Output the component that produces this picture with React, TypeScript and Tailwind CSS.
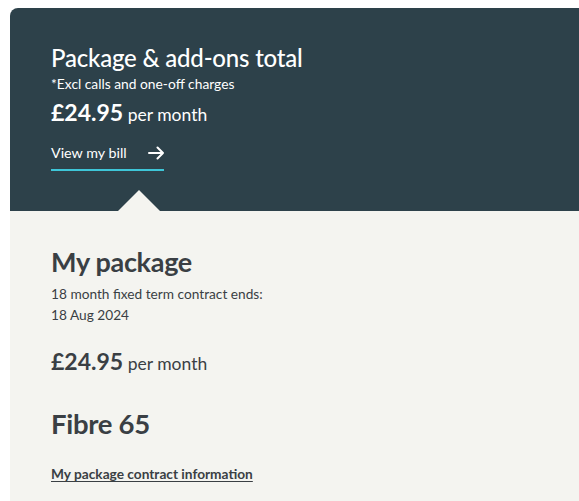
import React from "react";

export default function App() {
  return (
    <div className="w-[579px] h-[501px] bg-white pt-2 pl-[10px] overflow-hidden" style={{ fontFamily: "Lato, 'Noto Sans', sans-serif" }}>
      <div className="rounded-tl-lg overflow-hidden">
        <div className="relative bg-[#2d414a] h-[203px] pl-[41px] pt-[35px] text-white">
          <h2 className="text-[24px] leading-[30px] font-medium tracking-[-0.2px]">Package &amp; add-ons total</h2>
          <p className="text-[13.8px] leading-[18px] mt-[2px]">*Excl calls and one-off charges</p>
          <p className="mt-[6px] leading-[26px]">
            <span className="text-[23px] font-bold">£24.95</span>
            <span className="text-[17.5px]"> per month</span>
          </p>
          <a className="mt-[16px] inline-flex items-center gap-[21px] border-b-2 border-[#3ec6d8] pb-[7px] text-[14.3px] leading-[18px]">
            <span>View my bill</span>
            <svg width="16" height="14" viewBox="0 0 16 14" fill="none" stroke="white" strokeWidth="2" strokeLinecap="round" strokeLinejoin="round">
              <path d="M1 7h14M9.5 1.5L15 7l-5.5 5.5" />
            </svg>
          </a>
          <div className="absolute left-[108px] bottom-0 w-0 h-0 border-l-[21px] border-r-[21px] border-b-[21px] border-l-transparent border-r-transparent border-b-[#f4f4f0]" />
        </div>
        <div className="bg-[#f4f4f0] h-[290px] pl-[41px] pt-[34px] text-[#3a3f44]">
          <h2 className="text-[27px] leading-[34px] font-bold tracking-[-0.3px]">My package</h2>
          <p className="text-[13.7px] leading-[21px] mt-[4px]">18 month fixed term contract ends:</p>
          <p className="text-[13.7px] leading-[21px]">18 Aug 2024</p>
          <p className="mt-[21px] leading-[30px]">
            <span className="text-[23px] font-bold">£24.95</span>
            <span className="text-[17.5px]"> per month</span>
          </p>
          <h3 className="mt-[28px] text-[27.5px] leading-[34px] font-bold tracking-[-0.3px]">Fibre 65</h3>
          <a className="inline-block mt-[23px] text-[13.7px] font-bold underline underline-offset-2">My package contract information</a>
        </div>
      </div>
    </div>
  );
}
